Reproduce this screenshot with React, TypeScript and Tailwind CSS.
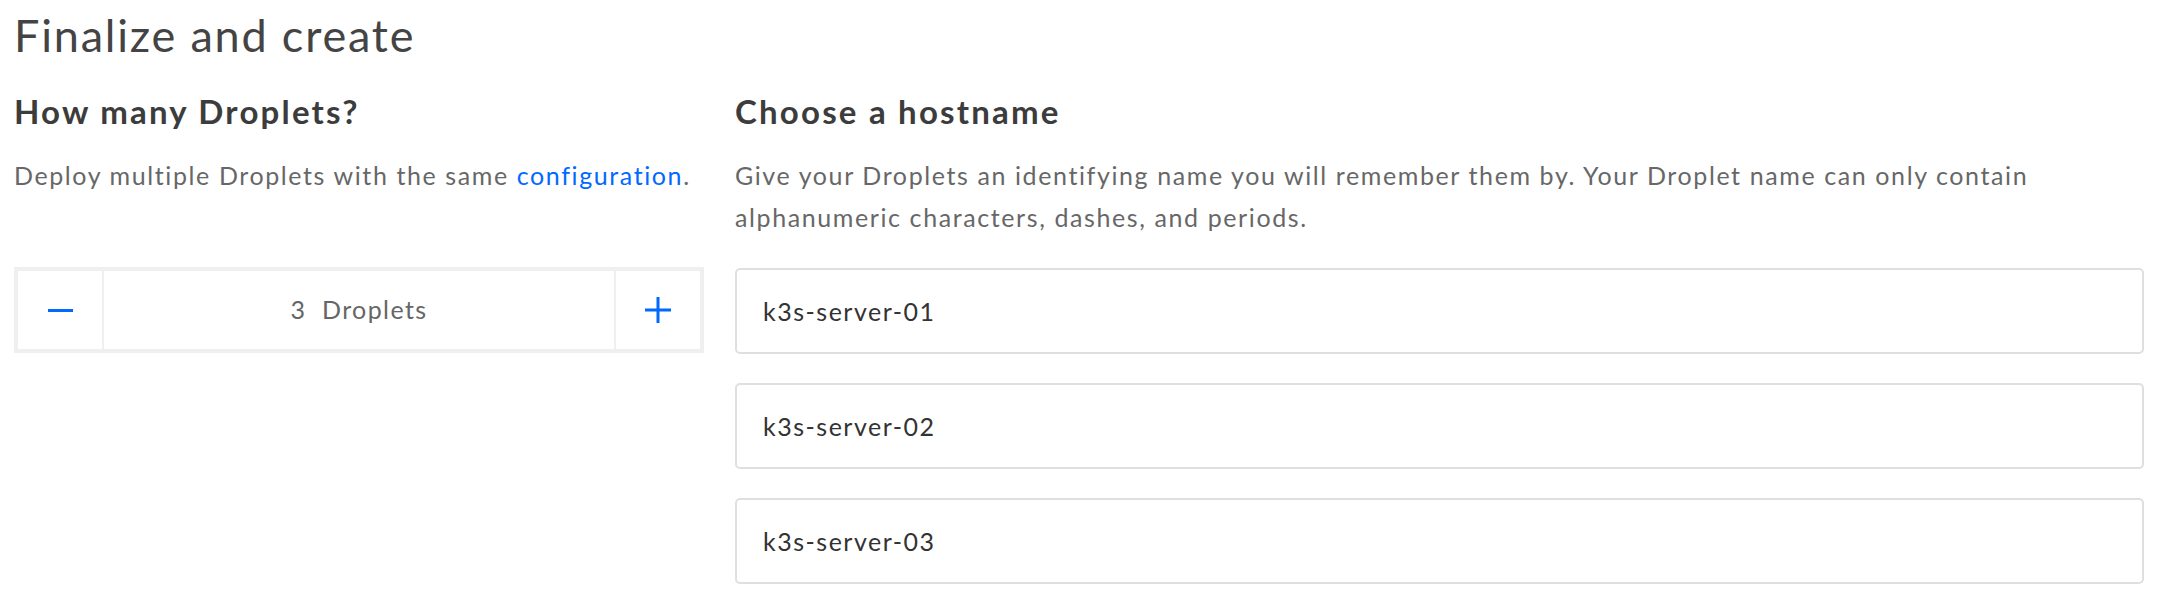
import { useState } from "react";

const hosts = ["k3s-server-01", "k3s-server-02", "k3s-server-03"];

function Stepper() {
  const [count, setCount] = useState(3);
  return (
    <div className="flex h-[86px] border-4 border-[#efefef] bg-white">
      <button
        onClick={() => setCount(Math.max(1, count - 1))}
        className="w-[84px] flex items-center justify-center"
      >
        <span className="block w-[25px] h-[3px] bg-[#0069ff]" />
      </button>
      <div className="flex-1 flex items-center justify-center border-x-2 border-[#efefef] text-[25px] tracking-[1.4px] text-[#666]">
        {count}&nbsp; Droplets
      </div>
      <button
        onClick={() => setCount(count + 1)}
        className="w-[84px] flex items-center justify-center"
      >
        <svg width="26" height="26" viewBox="0 0 26 26">
          <path d="M13 0v26M0 13h26" stroke="#0069ff" strokeWidth="3" />
        </svg>
      </button>
    </div>
  );
}

export default function App() {
  return (
    <div className="w-[2180px] h-[612px] bg-white pl-[14px] pr-[36px] pt-[9px] font-['Lato',sans-serif]">
      <h1 className="text-[45px] leading-[52px] tracking-[1.8px] text-[#444]">Finalize and create</h1>

      <div className="flex gap-[31px] mt-[30px]">
        {/* Droplet count */}
        <div className="w-[690px] shrink-0">
          <h3 className="text-[33px] leading-[40px] tracking-[2.2px] font-bold text-[#3c3c3c]">How many Droplets?</h3>
          <p className="mt-[23px] text-[25px] leading-[42px] tracking-[1.6px] text-[#676767]">
            Deploy multiple Droplets with the same <a className="text-[#0069ff]">configuration</a>.
          </p>
          <div className="mt-[71px]">
            <Stepper />
          </div>
        </div>

        {/* Hostnames */}
        <div className="flex-1">
          <h3 className="text-[33px] leading-[40px] tracking-[2.2px] font-bold text-[#3c3c3c]">Choose a hostname</h3>
          <p className="mt-[23px] text-[25px] leading-[42px] tracking-[1.6px] text-[#676767]">
            Give your Droplets an identifying name you will remember them by. Your Droplet name can only contain
            <br />
            alphanumeric characters, dashes, and periods.
          </p>
          <div className="mt-[30px] flex flex-col gap-[29px]">
            {hosts.map((h) => (
              <input
                key={h}
                defaultValue={h}
                className="h-[86px] w-full rounded-[5px] border-2 border-[#dfdfdf] px-[26px] text-[25px] tracking-[1.5px] text-[#333] outline-none"
              />
            ))}
          </div>
        </div>
      </div>
    </div>
  );
}
